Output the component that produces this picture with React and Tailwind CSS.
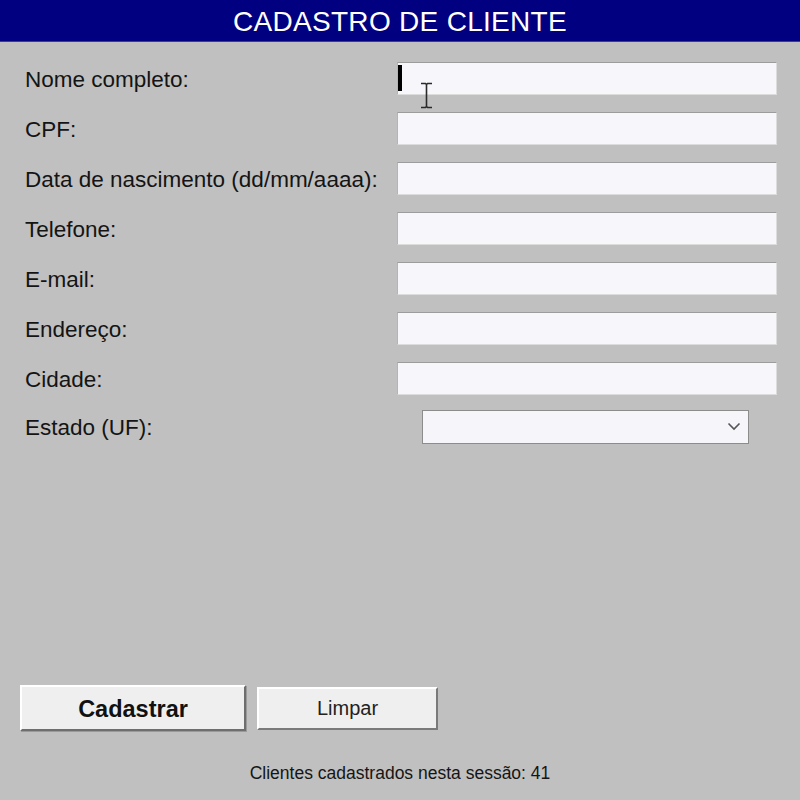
import { useState } from 'react';

const campos = [
  'Nome completo:',
  'CPF:',
  'Data de nascimento (dd/mm/aaaa):',
  'Telefone:',
  'E-mail:',
  'Endereço:',
  'Cidade:',
];

const App = () => {
  const [total] = useState(41);

  return (
    <div className="h-[800px] w-[800px] bg-[#c0c0c0] flex flex-col font-['Liberation_Sans',Arial,sans-serif] text-[#141414] overflow-hidden">
      {/* Barra de título */}
      <div className="h-[42px] bg-[#000080] border-b border-[#3a3aa0] flex items-center justify-center pt-[2px]">
        <h1 className="text-white text-[28px] leading-none tracking-[0.3px]">CADASTRO DE CLIENTE</h1>
      </div>

      {/* Campos do formulário */}
      <div className="pt-[20px] pl-[25px] grid grid-cols-[372px_380px] gap-y-[17px]">
        {campos.map((label, i) => (
          <div key={label} className="contents">
            <label className="h-[33px] pt-[4px] flex items-center text-[22.5px] leading-none">{label}</label>
            <div className="relative h-[33px]">
              <input
                readOnly
                className="w-full h-full bg-[#f7f7fb] border-t border-l border-t-[#9c9c9c] border-l-[#b4b4b4] border-b border-r border-b-[#dcdcdc] border-r-[#dcdcdc] outline-none"
              />
              {i === 0 && (
                <>
                  <span className="absolute left-[1px] top-[3px] w-[4px] h-[26px] bg-black" />
                  <svg className="absolute left-[23px] top-[20px]" width="13" height="27" viewBox="0 0 13 27">
                    <path d="M1 1.5h4.5l1 1 1-1H12M6.5 2.5v22M1 25.5h4.5l1-1 1 1H12" fill="none" stroke="#2a2a2a" strokeWidth="1.6" />
                  </svg>
                </>
              )}
            </div>
          </div>
        ))}
        <label className="h-[33px] mt-[-2px] pt-[4px] flex items-center text-[22.5px] leading-none">Estado (UF):</label>
        <div className="relative h-[34px] mt-[-2px] ml-[25px] w-[327px]">
          <select className="appearance-none w-full h-full bg-[#f5f5fa] border border-[#8c8c8c] outline-none">
            <option value=""></option>
          </select>
          <svg className="absolute right-[8px] top-[12px]" width="14" height="9" viewBox="0 0 14 9">
            <path d="M1.5 1.5l5.5 5.5 5.5-5.5" fill="none" stroke="#555" strokeWidth="1.6" />
          </svg>
        </div>
      </div>

      {/* Botões e contador */}
      <div className="mt-auto pb-[16px]">
        <div className="pl-[20px] flex items-center gap-[11px]">
          <button className="w-[226px] h-[46px] pt-[4px] bg-[#efefef] border-2 border-t-white border-l-white border-b-[#6e6e6e] border-r-[#6e6e6e] shadow-[1px_1px_0_#9a9a9a] text-[23.5px] font-bold text-[#111]">
            Cadastrar
          </button>
          <button className="w-[181px] h-[43px] bg-[#efefef] border-2 border-t-white border-l-white border-b-[#7a7a7a] border-r-[#7a7a7a] text-[20px] text-[#222]">
            Limpar
          </button>
        </div>
        <p className="mt-[32px] text-center text-[17.5px] leading-[21px] text-[#151515]">
          Clientes cadastrados nesta sessão: {total}
        </p>
      </div>
    </div>
  );
};

export default App;
